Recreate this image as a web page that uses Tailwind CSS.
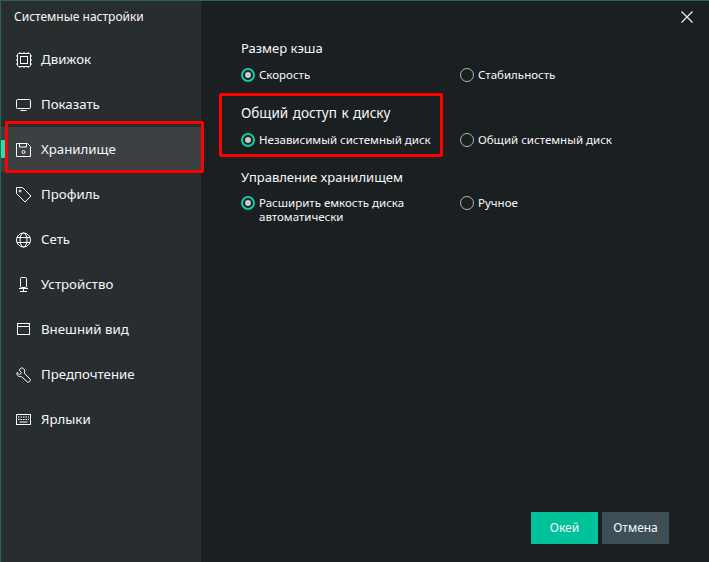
<!DOCTYPE html>
<html lang="en">
<head>
    <meta charset="UTF-8">
    <script src="https://cdn.jsdelivr.net/npm/@tailwindcss/browser@4"></script>
    <title>Системные настройки</title>
</head>
<body class="bg-[#1a1f22]">
    <div class="relative w-[709px] h-[562px] overflow-hidden flex bg-[#1a1f22] border-t border-l border-[#2f5f55] text-[#f8f8f8] font-['Noto_Sans',sans-serif]">
        <!-- Sidebar -->
        <div class="w-[200px] h-full bg-[#282d30] shrink-0">
            <div class="h-[36px] pl-[13px] pt-[6px] text-[12px] leading-[20px]">Системные настройки</div>
            <div class="flex flex-col">
                <div class="h-[45px] flex items-center pl-[15px] gap-[9px] text-[13.25px]">
                    <svg class="w-[16px] h-[16px]" viewBox="0 0 16 16" fill="none" stroke="#ffffff"><rect x="1.500" y="1.500" width="13" height="13" rx="1"/><rect x="4.500" y="4.500" width="7" height="7"/><path d="M4 0v1.500M8 0v1.500M12 0v1.500M4 14.500V16M8 14.500V16M12 14.500V16M0 4h1.500M0 8h1.500M0 12h1.500M14.500 4H16M14.500 8H16M14.500 12H16"/></svg>
                    <span class="pt-[1px]">Движок</span>
                </div>
                <div class="h-[45px] flex items-center pl-[15px] gap-[9px] text-[13.25px]">
                    <svg class="w-[16px] h-[16px]" viewBox="0 0 16 16" fill="none" stroke="#ffffff"><rect x="0.500" y="2.500" width="14" height="9" rx="1"/><path d="M4.500 13.500h6"/></svg>
                    <span class="pt-[1px]">Показать</span>
                </div>
                <div class="relative h-[45px] flex items-center pl-[15px] gap-[9px] text-[13.25px] bg-[#3b4043]">
                    <div class="absolute left-0 top-[13px] w-[4px] h-[18px] bg-[#14e6b4]"></div>
                    <svg class="w-[16px] h-[16px]" viewBox="0 0 16 16" fill="none" stroke="#ffffff"><path d="M.5 1.500h11l3 3v10h-14z"/><path d="M3.500 1.500v3.500h7v-3.500"/><circle cx="7.500" cy="10" r="1.500"/></svg>
                    <span class="pt-[1px]">Хранилище</span>
                </div>
                <div class="h-[45px] flex items-center pl-[15px] gap-[9px] text-[13.25px]">
                    <svg class="w-[16px] h-[16px]" viewBox="0 0 16 16" fill="none" stroke="#ffffff"><path d="M.5 .5h6l8.500 8.500-6 6-8.500-8.500z"/><circle cx="4" cy="4" r="1"/></svg>
                    <span class="pt-[1px]">Профиль</span>
                </div>
                <div class="h-[45px] flex items-center pl-[15px] gap-[9px] text-[13.25px]">
                    <svg class="w-[16px] h-[16px]" viewBox="0 0 16 16" fill="none" stroke="#ffffff"><circle cx="7.500" cy="8" r="7"/><ellipse cx="7.500" cy="8" rx="3.500" ry="7"/><path d="M1 5.500h13M1 10.500h13"/></svg>
                    <span class="pt-[1px]">Сеть</span>
                </div>
                <div class="h-[45px] flex items-center pl-[15px] gap-[9px] text-[13.25px]">
                    <svg class="w-[16px] h-[16px]" viewBox="0 0 16 16" fill="none" stroke="#ffffff"><rect x="4.500" y="0.500" width="6" height="10" rx="1"/><path d="M3 11.500h9M7.500 11.500v3M4 14.500h7"/></svg>
                    <span class="pt-[1px]">Устройство</span>
                </div>
                <div class="h-[45px] flex items-center pl-[15px] gap-[9px] text-[13.25px]">
                    <svg class="w-[16px] h-[16px]" viewBox="0 0 16 16" fill="none" stroke="#ffffff"><rect x="1.500" y="1.500" width="12" height="11"/><path d="M1.500 4.500h12"/></svg>
                    <span class="pt-[1px]">Внешний вид</span>
                </div>
                <div class="h-[45px] flex items-center pl-[15px] gap-[9px] text-[13.25px]">
                    <svg class="w-[16px] h-[16px]" viewBox="0 0 16 16" fill="none" stroke="#ffffff"><path d="M5.500 .8L3 3.200l2.500 2.500-2 2L1 5.500C.3 8 2.500 10.300 5.300 9.500l6.200 5.500c1.200 1 3.700-1.300 2.700-2.700L8.500 6.300C9.200 3.500 8 1 5.500 .8z"/></svg>
                    <span class="pt-[1px]">Предпочтение</span>
                </div>
                <div class="h-[45px] flex items-center pl-[15px] gap-[9px] text-[13.25px]">
                    <svg class="w-[16px] h-[16px]" viewBox="0 0 16 16" fill="none" stroke="#ffffff"><rect x="0.500" y="2.500" width="14" height="10"/><path d="M2 5h11M2 7.500h11" stroke-dasharray="1.500 1"/><path d="M3.500 10h8"/></svg>
                    <span class="pt-[1px]">Ярлыки</span>
                </div>
            </div>
        </div>

        <!-- Content -->
        <div class="flex-1 relative pl-[40px] pt-[37px]">
            <svg class="absolute right-[16px] top-[10px] w-[12px] h-[12px]" viewBox="0 0 12 12" stroke="#f2f2f2" stroke-width="1.200"><path d="M.5 .5l11 11M11.500 .5l-11 11"/></svg>

            <div class="text-[13px] leading-[20px]">Размер кэша</div>
            <div class="grid grid-cols-[219px_1fr] mt-[10px] text-[11.5px] leading-[14px]">
                <div class="flex gap-[4px] items-start">
                    <span class="w-[14px] h-[14px] rounded-full border-2 border-[#14cda0] flex items-center justify-center shrink-0"><span class="w-[6px] h-[6px] rounded-full bg-[#c9c9c9]"></span></span>
                    <span>Скорость</span>
                </div>
                <div class="flex gap-[4px] items-start">
                    <span class="w-[14px] h-[14px] rounded-full border-[1.5px] border-[#b5b5b5] shrink-0"></span>
                    <span>Стабильность</span>
                </div>
            </div>

            <div class="text-[13.5px] leading-[20px] mt-[21px] [word-spacing:1px]">Общий доступ к диску</div>
            <div class="grid grid-cols-[219px_1fr] mt-[10px] text-[11.5px] leading-[14px]">
                <div class="flex gap-[4px] items-start">
                    <span class="w-[14px] h-[14px] rounded-full border-2 border-[#14cda0] flex items-center justify-center shrink-0"><span class="w-[6px] h-[6px] rounded-full bg-[#c9c9c9]"></span></span>
                    <span>Независимый системный диск</span>
                </div>
                <div class="flex gap-[4px] items-start">
                    <span class="w-[14px] h-[14px] rounded-full border-[1.5px] border-[#b5b5b5] shrink-0"></span>
                    <span>Общий системный диск</span>
                </div>
            </div>

            <div class="text-[13px] leading-[20px] mt-[20px]">Управление хранилищем</div>
            <div class="grid grid-cols-[219px_1fr] mt-[9px] text-[11.5px] leading-[14px]">
                <div class="flex gap-[4px] items-start">
                    <span class="w-[14px] h-[14px] rounded-full border-2 border-[#14cda0] flex items-center justify-center shrink-0"><span class="w-[6px] h-[6px] rounded-full bg-[#c9c9c9]"></span></span>
                    <span class="w-[170px]">Расширить емкость диска автоматически</span>
                </div>
                <div class="flex gap-[4px] items-start">
                    <span class="w-[14px] h-[14px] rounded-full border-[1.5px] border-[#b5b5b5] shrink-0"></span>
                    <span>Ручное</span>
                </div>
            </div>

            <div class="absolute right-[40px] bottom-[18px] flex gap-[4px] text-[12px]">
                <button class="w-[67px] h-[32px] bg-[#00c29a]">Окей</button>
                <button class="w-[67px] h-[32px] bg-[#3e4e57]">Отмена</button>
            </div>
        </div>

        <!-- Red annotation boxes -->
        <div class="absolute left-[4px] top-[120px] w-[199px] h-[52px] border-[3px] border-[#ff0000] rounded-[2px]"></div>
        <div class="absolute left-[218px] top-[92px] w-[224px] h-[64px] border-[3px] border-[#ff0000] rounded-[2px]"></div>
    </div>
</body>
</html>
